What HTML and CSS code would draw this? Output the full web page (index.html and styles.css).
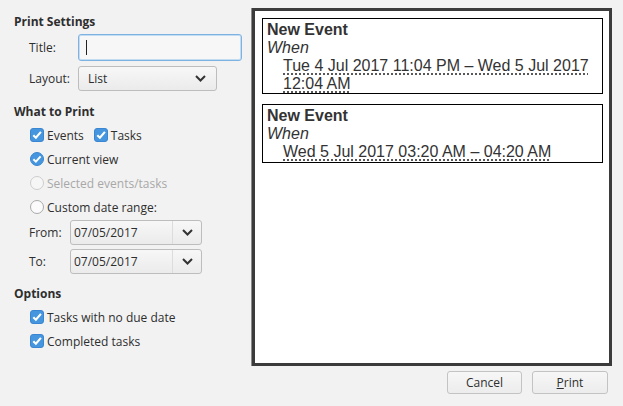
FILE: index.html
```html
<!DOCTYPE html>
<html>
<head>
<meta charset="utf-8">
<link rel="stylesheet" href="styles.css">
</head>
<body>
<div class="dialog">
  <div class="settings">
    <div class="heading h-first">Print Settings</div>
    <div class="field-row title-row">
      <label class="field-label">Title:</label>
      <div class="text-input"><span class="caret"></span></div>
    </div>
    <div class="field-row layout-row">
      <label class="field-label">Layout:</label>
      <div class="select">
        <span class="select-value">List</span>
        <svg class="chevron" width="11" height="7" viewBox="0 0 11 7"><path d="M1 1 L5.5 5.5 L10 1" fill="none" stroke="#333" stroke-width="2"/></svg>
      </div>
    </div>

    <div class="heading h-what">What to Print</div>
    <div class="opt-row">
      <span class="opt">
        <svg class="box" width="14" height="14" viewBox="0 0 14 14"><rect x="0.5" y="0.5" width="13" height="13" rx="2.5" fill="#4596de" stroke="#3a86d0"/><path d="M3.3 7.3 L5.9 9.8 L10.9 3.9" fill="none" stroke="#fff" stroke-width="2.1"/></svg>
        Events
      </span>
      <span class="opt opt-second">
        <svg class="box" width="14" height="14" viewBox="0 0 14 14"><rect x="0.5" y="0.5" width="13" height="13" rx="2.5" fill="#4596de" stroke="#3a86d0"/><path d="M3.3 7.3 L5.9 9.8 L10.9 3.9" fill="none" stroke="#fff" stroke-width="2.1"/></svg>
        Tasks
      </span>
    </div>
    <div class="opt-row">
      <span class="opt">
        <svg class="box" width="14" height="14" viewBox="0 0 14 14"><circle cx="7" cy="7" r="6.5" fill="#4596de" stroke="#3a86d0"/><path d="M3.4 7.2 L5.9 9.6 L10.6 4.3" fill="none" stroke="#fff" stroke-width="2"/></svg>
        Current view
      </span>
    </div>
    <div class="opt-row disabled">
      <span class="opt">
        <svg class="box" width="14" height="14" viewBox="0 0 14 14"><circle cx="7" cy="7" r="6.5" fill="#f6f6f6" stroke="#cdcdcd"/></svg>
        Selected events/tasks
      </span>
    </div>
    <div class="opt-row">
      <span class="opt">
        <svg class="box" width="14" height="14" viewBox="0 0 14 14"><circle cx="7" cy="7" r="6.5" fill="#fbfbfb" stroke="#a9a9a9"/></svg>
        Custom date range:
      </span>
    </div>
    <div class="date-row from-row">
      <label class="date-label">From:</label>
      <div class="combo">
        <span class="combo-value">07/05/2017</span>
        <span class="combo-btn"><svg width="11" height="7" viewBox="0 0 11 7"><path d="M1 1 L5.5 5.5 L10 1" fill="none" stroke="#333" stroke-width="2"/></svg></span>
      </div>
    </div>
    <div class="date-row to-row">
      <label class="date-label">To:</label>
      <div class="combo">
        <span class="combo-value">07/05/2017</span>
        <span class="combo-btn"><svg width="11" height="7" viewBox="0 0 11 7"><path d="M1 1 L5.5 5.5 L10 1" fill="none" stroke="#333" stroke-width="2"/></svg></span>
      </div>
    </div>

    <div class="heading h-options">Options</div>
    <div class="opt-row">
      <span class="opt">
        <svg class="box" width="14" height="14" viewBox="0 0 14 14"><rect x="0.5" y="0.5" width="13" height="13" rx="2.5" fill="#4596de" stroke="#3a86d0"/><path d="M3.3 7.3 L5.9 9.8 L10.9 3.9" fill="none" stroke="#fff" stroke-width="2.1"/></svg>
        Tasks with no due date
      </span>
    </div>
    <div class="opt-row">
      <span class="opt">
        <svg class="box" width="14" height="14" viewBox="0 0 14 14"><rect x="0.5" y="0.5" width="13" height="13" rx="2.5" fill="#4596de" stroke="#3a86d0"/><path d="M3.3 7.3 L5.9 9.8 L10.9 3.9" fill="none" stroke="#fff" stroke-width="2.1"/></svg>
        Completed tasks
      </span>
    </div>
  </div>

  <div class="preview-col">
    <div class="preview">
      <div class="event">
        <div class="ev-title">New Event</div>
        <div class="ev-when">When</div>
        <div class="ev-date"><span class="dt">Tue 4 Jul 2017 11:04 PM – Wed 5 Jul 2017 12:04 AM</span></div>
      </div>
      <div class="event">
        <div class="ev-title">New Event</div>
        <div class="ev-when">When</div>
        <div class="ev-date"><span class="dt">Wed 5 Jul 2017 03:20 AM – 04:20 AM</span></div>
      </div>
    </div>
    <div class="buttons">
      <button class="btn">Cancel</button>
      <button class="btn"><u>P</u>rint</button>
    </div>
  </div>
</div>
</body>
</html>
```

FILE: styles.css
```css
html, body {
  margin: 0;
  padding: 0;
}
body {
  background: #f2f2f2;
  font-family: "Open Sans", "Noto Sans", sans-serif;
  font-size: 12px;
  color: #2e2e2e;
  width: 623px;
  height: 406px;
  overflow: hidden;
}
.dialog {
  display: flex;
  height: 406px;
}
.settings {
  width: 238px;
  padding-left: 14px;
  display: flex;
  flex-direction: column;
}
.heading {
  font-weight: bold;
  height: 18px;
  line-height: 18px;
}
.h-first { margin-top: 13px; }
.h-what { margin-top: 12px; }
.h-options { margin-top: 11px; }

.field-row {
  display: flex;
  align-items: center;
}
.field-label {
  padding-left: 15px;
  flex: none;
  box-sizing: border-box;
  width: 64px;
}
.title-row { margin-top: 3px; }
.layout-row { margin-top: 5px; }
.text-input {
  width: 164px;
  height: 27px;
  box-sizing: border-box;
  border: 1px solid #7db3e3;
  border-radius: 3px;
  background: #f7f7f7;
  box-shadow: inset 0 0 0 1px #c4dcf2;
  display: flex;
  align-items: center;
  padding-left: 7px;
}
.caret {
  width: 1px;
  height: 15px;
  background: #222;
}
.select {
  width: 139px;
  height: 25px;
  box-sizing: border-box;
  border: 1px solid #bdbdbd;
  border-radius: 3px;
  background: linear-gradient(#f7f7f7, #ebebeb);
  display: flex;
  align-items: center;
  justify-content: space-between;
  padding: 0 10px 0 9px;
}
.opt-row {
  height: 24px;
  display: flex;
  align-items: center;
  padding-left: 16px;
}
.h-what + .opt-row { margin-top: 2px; }
.h-options + .opt-row { margin-top: 2px; }
.opt {
  display: inline-flex;
  align-items: center;
  gap: 3px;
}
.opt-second { margin-left: 10px; }
.box { flex: none; }
.disabled { color: #a8a8a8; }

.date-row {
  display: flex;
  align-items: center;
}
.from-row { margin-top: 1px; }
.to-row { margin-top: 4px; }
.date-label {
  width: 56px;
  padding-left: 15px;
  box-sizing: border-box;
  flex: none;
}
.combo {
  width: 132px;
  height: 25px;
  box-sizing: border-box;
  border: 1px solid #bdbdbd;
  border-radius: 3px;
  background: linear-gradient(#f7f7f7, #ebebeb);
  display: flex;
  align-items: stretch;
}
.combo-value {
  flex: 1;
  display: flex;
  align-items: center;
  padding-left: 3px;
  border-right: 1px solid #dcdcdc;
}
.combo-btn {
  width: 28px;
  display: flex;
  align-items: center;
  justify-content: center;
}

.preview-col {
  display: flex;
  flex-direction: column;
  padding-top: 8px;
}
.preview {
  width: 360px;
  height: 358px;
  box-sizing: border-box;
  border: 3px solid #3b3b3b;
  box-shadow: -1px 0 0 #8a8a8a;
  background: #fff;
  padding: 7px 6px 0 7px;
  font-family: "Liberation Sans", Arial, sans-serif;
  font-size: 16px;
  line-height: 18px;
  color: #333;
}
.event {
  border: 1px solid #000;
  padding: 2px 4px 0 4px;
  margin-bottom: 10px;
}
.event + .event { padding-bottom: 1px; }
.ev-title { font-weight: bold; }
.ev-when { font-style: italic; }
.ev-date { padding-left: 16px; }
.dt {
  text-decoration: underline dotted #222;
  text-underline-offset: 3px;
}
.buttons {
  display: flex;
  justify-content: flex-end;
  gap: 10px;
  margin-top: 5px;
  padding-right: 4px;
}
.btn {
  font-family: "Open Sans", "Noto Sans", sans-serif;
  font-size: 12px;
  color: #2e2e2e;
  height: 23px;
  width: 75px;
  border: 1px solid #c3c3c3;
  border-radius: 3px;
  background: linear-gradient(#f7f7f7, #ececec);
  padding: 0;
}
.btn + .btn { width: 76px; }
```
